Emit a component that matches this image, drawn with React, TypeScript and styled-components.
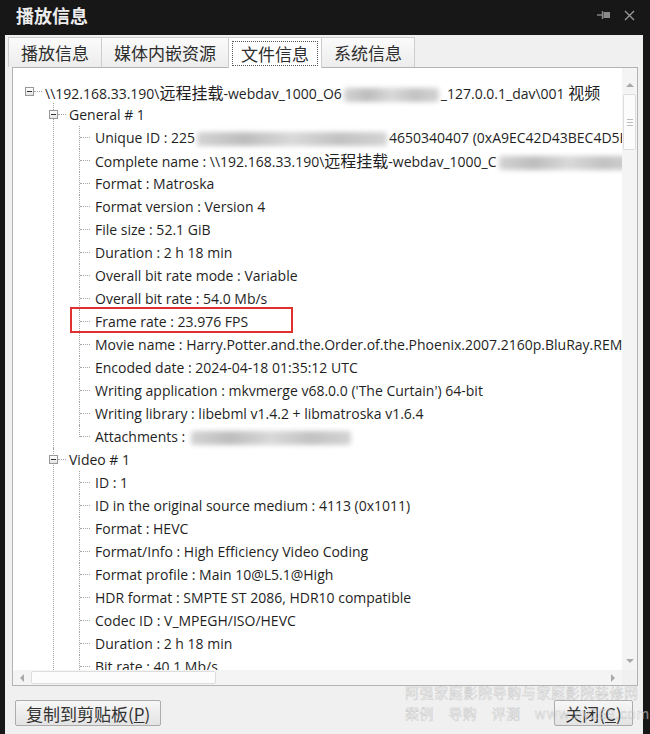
import React from 'react';
import styled, { createGlobalStyle } from 'styled-components';

const UI_FONT = `'Noto Sans CJK SC', 'Noto Sans', sans-serif`;
const TREE_FONT = `'Open Sans', 'Noto Sans CJK SC', sans-serif`;
const LINE = '#a3a3a3';

const GlobalStyle = createGlobalStyle`
  html, body {
    margin: 0;
    padding: 0;
    background: #171717;
  }
  body {
    font-family: ${UI_FONT};
  }
`;

const Window = styled.div`
  width: 650px;
  height: 734px;
  box-sizing: border-box;
  padding: 0 7px 0 5px;
  background: #171717;
  display: flex;
  flex-direction: column;
`;

const TitleBar = styled.div`
  flex: none;
  height: 35px;
  padding: 0 8px 5px 11px;
  box-sizing: border-box;
  display: flex;
  align-items: center;
  justify-content: space-between;
`;

const Title = styled.span`
  font-size: 18px;
  font-weight: 700;
  color: #ececec;
`;

const TitleIcons = styled.div`
  display: flex;
  align-items: center;
  gap: 13px;
`;

const Body = styled.div`
  flex: 1;
  background: #f0f0f0;
  display: flex;
  flex-direction: column;
`;

const TabStrip = styled.div`
  flex: none;
  height: 32px;
  padding: 2px 0 0 3px;
  box-sizing: border-box;
  display: flex;
  align-items: stretch;
`;

const Tab = styled.div<{ $active?: boolean }>`
  position: relative;
  padding: 0 12px;
  margin-right: -1px;
  display: flex;
  align-items: center;
  font-size: 17px;
  color: #2d2d2d;
  border: 1px solid #cdcdcd;
  border-bottom: none;
  background: ${(p) => (p.$active ? '#ffffff' : 'linear-gradient(#fbfbfb, #ececec)')};
  z-index: ${(p) => (p.$active ? 2 : 1)};
  margin-bottom: ${(p) => (p.$active ? '-1px' : '0')};

  &::after {
    content: '';
    display: ${(p) => (p.$active ? 'block' : 'none')};
    position: absolute;
    inset: 3px 3px 2px 3px;
    border: 1px dotted #555;
  }
`;

const TreeBox = styled.div`
  flex: none;
  height: 619px;
  margin: 0 5px 0 7px;
  box-sizing: border-box;
  border: 1px solid #b3b3b3;
  background: #ffffff;
  display: grid;
  grid-template-columns: 1fr 15px;
  grid-template-rows: 1fr 15px;
`;

const TreeContent = styled.div`
  min-width: 0;
  overflow: hidden;
  padding-top: 12px;
  font-family: ${TREE_FONT};
  font-size: 14px;
  color: #1f1f1f;
  white-space: nowrap;
`;

const RootRow = styled.div`
  height: 23px;
  padding-left: 12px;
  display: flex;
  align-items: center;
`;

const Expander = styled.span<{ $shift?: number }>`
  position: relative;
  flex: none;
  box-sizing: border-box;
  width: 9px;
  height: 9px;
  margin-left: ${(p) => p.$shift ?? 0}px;
  border: 1px solid #989898;
  background: linear-gradient(#ffffff, #e4e4e4);

  &::after {
    content: '';
    position: absolute;
    left: 1px;
    right: 1px;
    top: 3px;
    height: 1px;
    background: #333;
  }
`;

const Tick = styled.span`
  flex: none;
  width: 8px;
  margin-right: 3px;
  border-top: 1px dotted ${LINE};
`;

const SectionList = styled.div`
  margin-left: 40px;
`;

const Section = styled.div`
  position: relative;

  &::before {
    content: '';
    position: absolute;
    left: 0;
    top: 0;
    bottom: 0;
    border-left: 1px dotted ${LINE};
  }
`;

const SectionRow = styled.div`
  position: relative;
  z-index: 1;
  height: 23px;
  display: flex;
  align-items: center;
`;

const LeafList = styled.div`
  margin-left: 26px;
`;

const Leaf = styled.div`
  position: relative;
  height: 23px;
  line-height: 23px;
  padding-left: 16px;

  &::before {
    content: '';
    position: absolute;
    left: 0;
    top: 0;
    bottom: 0;
    border-left: 1px dotted ${LINE};
  }
  &:last-child::before {
    bottom: 11px;
  }
  &::after {
    content: '';
    position: absolute;
    left: 1px;
    top: 11px;
    width: 10px;
    border-top: 1px dotted ${LINE};
  }
`;

const Highlight = styled.span`
  position: absolute;
  left: -9px;
  top: -3px;
  width: 223px;
  height: 26px;
  box-sizing: border-box;
  border: 2px solid #e03131;
`;

const Cjk = styled.span`
  font-family: ${UI_FONT};
  font-size: 16px;
`;

const Smudge = styled.span<{ $w: number }>`
  display: inline-block;
  vertical-align: middle;
  width: ${(p) => p.$w}px;
  height: 14px;
  margin: 0 2px;
  border-radius: 3px;
  background: linear-gradient(90deg, #d3d3d3, #bdbdbd 25%, #d9d9d9 50%, #c2c2c2 75%, #d4d4d4);
  filter: blur(2.5px);
`;

const VScroll = styled.div`
  background: #f4f4f4;
  display: flex;
  flex-direction: column;
  align-items: center;
`;

const HScroll = styled.div`
  background: #f4f4f4;
  display: flex;
  align-items: center;
  min-width: 0;
`;

const Corner = styled.div`
  background: #f0f0f0;
`;

type Dir = 'up' | 'down' | 'left' | 'right';

const arrowBorder = (d: Dir) => {
  const c = '#a9a9a9';
  if (d === 'up') return `border-width: 0 4px 4px 4px; border-color: transparent transparent ${c} transparent;`;
  if (d === 'down') return `border-width: 4px 4px 0 4px; border-color: ${c} transparent transparent transparent;`;
  if (d === 'left') return `border-width: 4px 4px 4px 0; border-color: transparent ${c} transparent transparent;`;
  return `border-width: 4px 0 4px 4px; border-color: transparent transparent transparent ${c};`;
};

const ScrollArrow = styled.div<{ $dir: Dir; $gap?: number }>`
  flex: none;
  width: ${(p) => (p.$dir === 'up' || p.$dir === 'down' ? '15px' : '18px')};
  height: ${(p) => (p.$dir === 'up' || p.$dir === 'down' ? '18px' : '15px')};
  margin-top: ${(p) => p.$gap ?? 0}px;
  display: flex;
  align-items: center;
  justify-content: center;

  &::before {
    content: '';
    width: 0;
    height: 0;
    border-style: solid;
    ${(p) => arrowBorder(p.$dir)}
  }
`;

const VThumb = styled.div`
  flex: none;
  width: 13px;
  height: 56px;
  box-sizing: border-box;
  border: 1px solid #dddddd;
  border-radius: 2px;
  background: #fcfcfc;
  display: flex;
  align-items: center;
  justify-content: center;

  &::before {
    content: '';
    width: 6px;
    height: 5px;
    border-top: 1px solid #bdbdbd;
    border-bottom: 1px solid #bdbdbd;
    background: linear-gradient(transparent 2px, #bdbdbd 2px, #bdbdbd 3px, transparent 3px);
  }
`;

const HThumb = styled.div`
  flex: none;
  width: 185px;
  height: 13px;
  box-sizing: border-box;
  border: 1px solid #dddddd;
  border-radius: 2px;
  background: #fcfcfc;
`;

const Spacer = styled.div`
  flex: 1;
`;

const Footer = styled.div`
  position: relative;
  flex: 1;
  padding: 14px 10px 0 10px;
  display: flex;
  align-items: flex-start;
  justify-content: space-between;
`;

const Button = styled.button<{ $min?: number }>`
  position: relative;
  height: 26px;
  min-width: ${(p) => p.$min ?? 0}px;
  padding: 0 10px;
  display: flex;
  align-items: center;
  justify-content: center;
  font-family: ${UI_FONT};
  font-size: 17px;
  line-height: 1;
  color: #333;
  border: 1px solid #acacac;
  border-radius: 2px;
  background: linear-gradient(#f7f7f7, #e3e3e3);
`;

const Watermark = styled.div`
  position: absolute;
  left: 400px;
  top: -4px;
  z-index: 3;
  white-space: nowrap;
  font-family: ${UI_FONT};
  font-size: 14px;
  line-height: 21px;
  letter-spacing: 0.6px;
  color: rgba(255, 255, 255, 0.45);
  -webkit-text-stroke: 0.5px rgba(150, 150, 150, 0.45);
  pointer-events: none;
`;

const MarkGap = styled.span<{ $w: number }>`
  display: inline-block;
  width: ${(p) => p.$w}px;
`;

const PinIcon = () => (
  <svg width="14" height="10" viewBox="0 0 14 10">
    <path d="M0 5h5" stroke="#8a8a8a" strokeWidth="1.4" />
    <path d="M5.5 1v8" stroke="#8a8a8a" strokeWidth="1.4" />
    <rect x="6.5" y="2" width="6.5" height="6" fill="#8a8a8a" />
  </svg>
);

const CloseIcon = () => (
  <svg width="11" height="11" viewBox="0 0 11 11">
    <path d="M1 1l9 9M10 1l-9 9" stroke="#9a9a9a" strokeWidth="1.3" />
  </svg>
);

const generalRows: React.ReactNode[] = [
  <>Unique ID : 225<Smudge $w={190} />4650340407 (0xA9EC42D43BEC4D5E7)</>,
  <>Complete name : \\192.168.33.190\<Cjk>远程挂载</Cjk>-webdav_1000_C<Smudge $w={140} /></>,
  'Format : Matroska',
  'Format version : Version 4',
  'File size : 52.1 GiB',
  'Duration : 2 h 18 min',
  'Overall bit rate mode : Variable',
  'Overall bit rate : 54.0 Mb/s',
  'Frame rate : 23.976 FPS',
  'Movie name : Harry.Potter.and.the.Order.of.the.Phoenix.2007.2160p.BluRay.REMUX.HEVC.DTS-HD.MA.TrueHD',
  'Encoded date : 2024-04-18 01:35:12 UTC',
  "Writing application : mkvmerge v68.0.0 ('The Curtain') 64-bit",
  'Writing library : libebml v1.4.2 + libmatroska v1.6.4',
  <>Attachments : <Smudge $w={160} /></>,
];

const videoRows: React.ReactNode[] = [
  'ID : 1',
  'ID in the original source medium : 4113 (0x1011)',
  'Format : HEVC',
  'Format/Info : High Efficiency Video Coding',
  'Format profile : Main 10@L5.1@High',
  'HDR format : SMPTE ST 2086, HDR10 compatible',
  'Codec ID : V_MPEGH/ISO/HEVC',
  'Duration : 2 h 18 min',
  'Bit rate : 40.1 Mb/s',
  'Width : 3 840 pixels',
  'Height : 2 160 pixels',
];

const sections = [
  { name: 'General # 1', rows: generalRows },
  { name: 'Video # 1', rows: videoRows },
];

const tabs = ['播放信息', '媒体内嵌资源', '文件信息', '系统信息'];

export default function App() {
  return (
    <Window>
      <GlobalStyle />
      <TitleBar>
        <Title>播放信息</Title>
        <TitleIcons>
          <PinIcon />
          <CloseIcon />
        </TitleIcons>
      </TitleBar>
      <Body>
        <TabStrip>
          {tabs.map((t, i) => (
            <Tab key={t} $active={i === 2}>
              {t}
            </Tab>
          ))}
        </TabStrip>
        <TreeBox>
          <TreeContent>
            <RootRow>
              <Expander />
              <Tick />
              <span>
                \\192.168.33.190\<Cjk>远程挂载</Cjk>-webdav_1000_O6<Smudge $w={95} />_127.0.0.1_dav\001 <Cjk>视频</Cjk>
              </span>
            </RootRow>
            <SectionList>
              {sections.map((s) => (
                <Section key={s.name}>
                  <SectionRow>
                    <Expander $shift={-4} />
                    <Tick />
                    <span>{s.name}</span>
                  </SectionRow>
                  <LeafList>
                    {s.rows.map((r, i) => (
                      <Leaf key={i}>
                        {s.name === 'General # 1' && i === 8 && <Highlight />}
                        {r}
                      </Leaf>
                    ))}
                  </LeafList>
                </Section>
              ))}
            </SectionList>
          </TreeContent>
          <VScroll>
            <ScrollArrow $dir="up" $gap={8} />
            <VThumb />
            <Spacer />
            <ScrollArrow $dir="down" />
          </VScroll>
          <HScroll>
            <ScrollArrow $dir="left" />
            <HThumb />
            <Spacer />
            <ScrollArrow $dir="right" />
          </HScroll>
          <Corner />
        </TreeBox>
        <Footer>
          <Button>
            复制到剪贴板(<u>P</u>)
          </Button>
          <Button $min={79}>
            关闭(<u>C</u>)
          </Button>
          <Watermark>
            <div>阿强家庭影院导购与家庭影院装修网</div>
            <div>
              案例<MarkGap $w={14} />导购<MarkGap $w={14} />评测<MarkGap $w={14} />www.av269.com
            </div>
          </Watermark>
        </Footer>
      </Body>
    </Window>
  );
}
